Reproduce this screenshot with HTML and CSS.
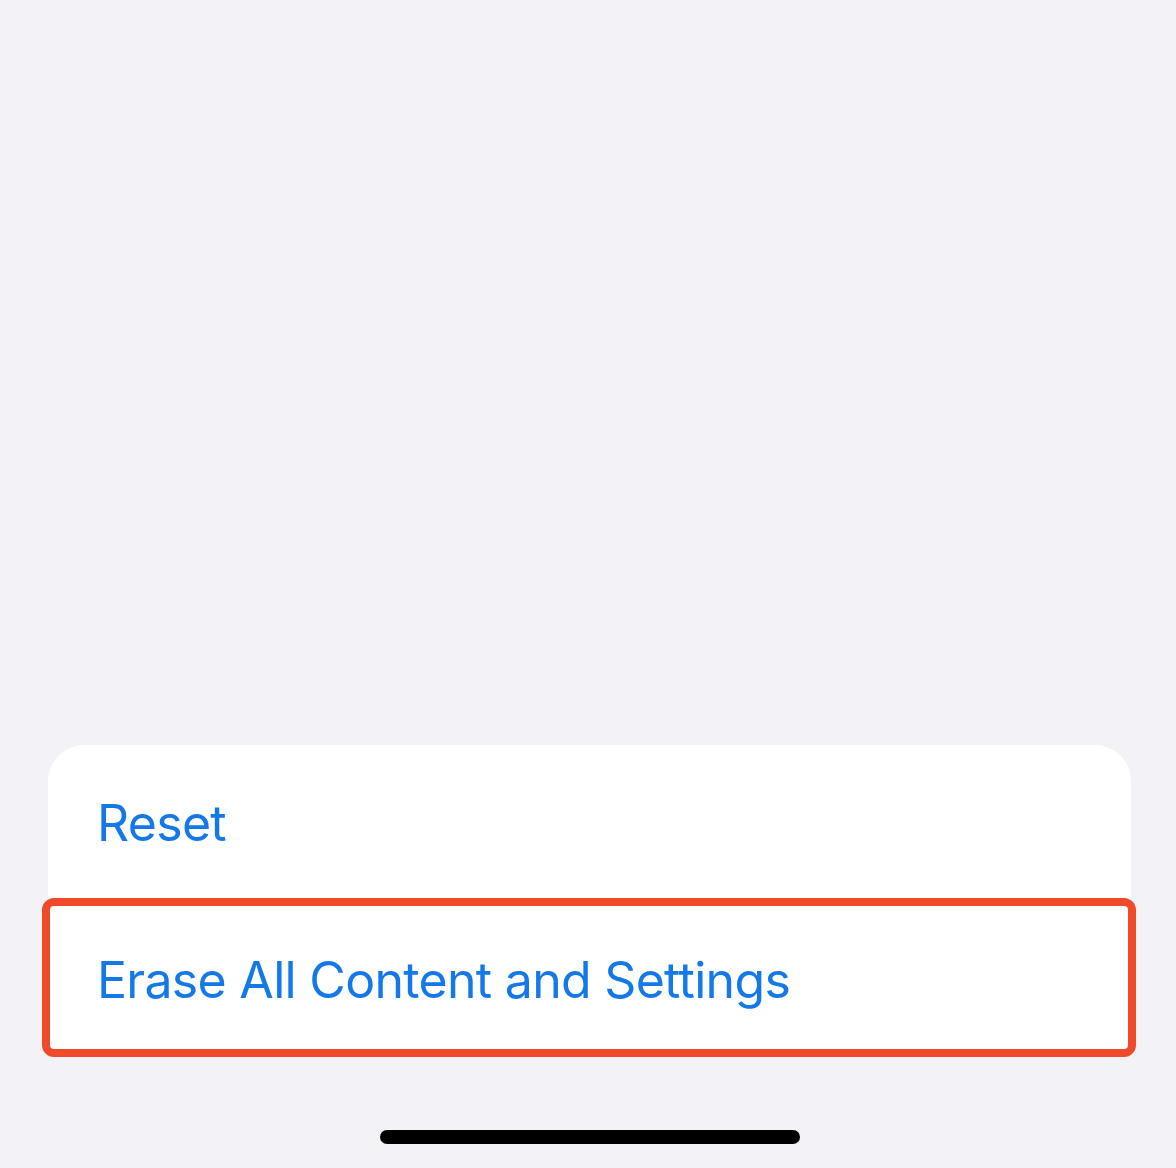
FILE: index.html
```html
<!DOCTYPE html>
<html lang="en">
<head>
<meta charset="utf-8">
<title>Reset</title>
<link rel="stylesheet" href="styles.css">
</head>
<body>
<main class="screen">
  <section class="card">
    <div class="row">Reset</div>
    <div class="row row-highlight">Erase All Content and Settings</div>
  </section>
  <div class="home-bar"></div>
</main>
</body>
</html>
```

FILE: styles.css
```css
html, body {
  margin: 0;
  padding: 0;
  background: #f2f2f7;
}
.screen {
  width: 1176px;
  height: 1168px;
  box-sizing: border-box;
  padding-top: 745px;
  display: flex;
  flex-direction: column;
  align-items: center;
  font-family: Inter, "Noto Sans", sans-serif;
}
.card {
  width: 1083px;
  margin-left: 3px;
  background: #ffffff;
  border-radius: 36px 36px 12px 12px;
  display: flex;
  flex-direction: column;
}
.row {
  height: 153px;
  box-sizing: border-box;
  padding-left: 49px;
  padding-top: 2px;
  display: flex;
  align-items: center;
  color: #1479e6;
  font-size: 50px;
  letter-spacing: -0.7px;
}
.row-highlight {
  position: relative;
  height: 154px;
  padding-top: 10px;
}
.row-highlight::after {
  content: "";
  position: absolute;
  top: 0;
  left: -6px;
  right: -5px;
  bottom: -5px;
  border: 8px solid #ef4b2a;
  border-radius: 12px;
}
.home-bar {
  width: 420px;
  height: 14px;
  border-radius: 7px;
  background: #000;
  margin-top: 78px;
  margin-left: 4px;
}
```
